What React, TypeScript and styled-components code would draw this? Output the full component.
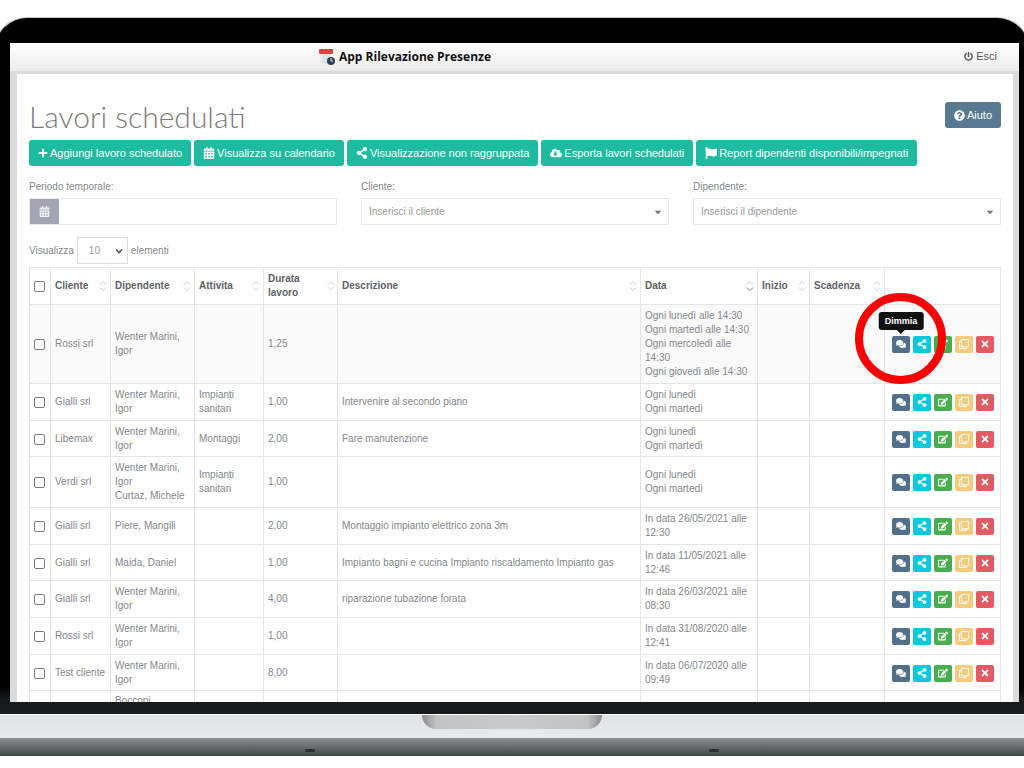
import React from 'react';
import styled, { createGlobalStyle } from 'styled-components';
import type { IconType } from 'react-icons';
import {
  FaPlus, FaCalendarAlt, FaShareAlt, FaCloudDownloadAlt, FaFlag, FaQuestionCircle,
  FaPowerOff, FaComments, FaEdit, FaRegClone, FaTimes, FaCaretDown,
} from 'react-icons/fa';

const GlobalStyle = createGlobalStyle`
  *, *::before, *::after { box-sizing: border-box; }
  body {
    margin: 0;
    background: #fefefe;
    color: #85878c;
    font: 10px/14px "Liberation Sans", Arial, sans-serif;
  }
  button, input, select { font: inherit; color: inherit; margin: 0; }
`;

const Laptop = styled.div`
  display: flex;
  flex-direction: column;
  height: 100vh;
  padding: 18px 0 12px;
  overflow: hidden;
`;

const Lid = styled.div`
  flex: 1;
  min-height: 0;
  display: flex;
  margin: 0 -5px;
  padding: 25px 10px 12px 15px;
  border-radius: 32px 32px 0 0;
  background: linear-gradient(#000 96%, #171b1c 98%);
  box-shadow: 0 0 0 1px #c4c4c4;
`;

const Screen = styled.div`
  flex: 1;
  min-width: 0;
  display: flex;
  flex-direction: column;
  overflow: hidden;
  background: #dadada;
`;

const Base = styled.div`
  height: 24px;
  flex: none;
  display: flex;
  justify-content: center;
  border-top: 1px solid #fff;
  background: linear-gradient(#dfe1e3, #e9eaec);
`;

const Notch = styled.div`
  width: 180px;
  height: 14px;
  border-radius: 0 0 14px 14px;
  background: linear-gradient(90deg, #8b8b8c, #c3c3c4 8%, #cbcbcc 50%, #c3c3c4 92%, #8b8b8c);
`;

const Foot = styled.div`
  height: 18px;
  flex: none;
  display: flex;
  justify-content: space-around;
  align-items: flex-end;
  padding: 0 108px 4px;
  background: linear-gradient(#8d9191, #6a6e6e 45%, #414545);
`;

const Rubber = styled.span`
  width: 10px;
  height: 3px;
  border-radius: 3px;
  background: #2c3030;
`;

const TopBar = styled.header`
  flex: none;
  display: grid;
  grid-template-columns: 1fr auto 1fr;
  align-items: center;
  height: 28px;
  padding-right: 22px;
  background: linear-gradient(#fff, #ececec);
`;

const Brand = styled.div`
  grid-column: 1 / 3;
  display: flex;
  align-items: center;
  gap: 3px;
  margin-left: 308px;
  color: #111;
  font: bold 12px/16px "Open Sans", sans-serif;
`;

const ExitLink = styled.a`
  justify-self: end;
  display: flex;
  align-items: center;
  gap: 3px;
  padding-bottom: 2px;
  color: #555;
  font-size: 11px;
  text-decoration: none;
`;

const Panel = styled.main`
  flex: 1;
  min-height: 0;
  margin: 3px 6px 0 7px;
  padding: 28px 12px 0;
  overflow: hidden;
  background: #fff;
`;

const TitleRow = styled.div`
  display: flex;
  justify-content: space-between;
  align-items: flex-start;
  height: 38px;
`;

const Title = styled.h1`
  margin: 0;
  color: #7c7c7c;
  font: 300 30px/28px Lato, sans-serif;
`;

const Button = styled.button<{ $bg: string }>`
  display: flex;
  align-items: center;
  gap: 2px;
  height: 26px;
  padding: 0 9px;
  border: 0;
  border-radius: 3px;
  background: ${(p) => p.$bg};
  color: #fff;
  font-size: 11px;
  white-space: nowrap;
`;

const Toolbar = styled.div`
  display: flex;
  gap: 3px;
`;

const Filters = styled.div`
  display: grid;
  grid-template-columns: repeat(3, 1fr);
  gap: 24px;
  margin-top: 14px;
`;

const Field = styled.div`
  display: flex;
  flex-direction: column;
  gap: 4px;
`;

const Control = styled.div`
  display: flex;
  align-items: center;
  height: 27px;
  border: 1px solid #e8e9ec;
`;

const ControlIcon = styled.span`
  display: flex;
  align-items: center;
  justify-content: center;
  align-self: stretch;
  width: 29px;
  background: #a3a6b2;
  color: #f0f0f5;
  font-size: 11px;
`;

const TextInput = styled.input`
  flex: 1;
  min-width: 0;
  border: 0;
  padding: 0 8px;
  background: transparent;
`;

const PlainSelect = styled.select`
  flex: 1;
  min-width: 0;
  height: 100%;
  padding: 0 7px;
  border: 0;
  appearance: none;
  background: transparent;
  color: #999;
`;

const Caret = styled(FaCaretDown)`
  flex: none;
  margin-right: 5px;
  color: #777;
  pointer-events: none;
`;

const LengthRow = styled.label`
  display: flex;
  align-items: center;
  gap: 3px;
  height: 27px;
  margin: 12px 0 3px;
`;

const LengthBox = styled.span`
  display: flex;
  align-items: center;
  width: 51px;
  height: 27px;
  padding: 0 3px 0 4px;
  border: 1px solid #dcdde0;
`;

const Table = styled.table`
  width: 100%;
  table-layout: fixed;
  border-collapse: collapse;

  th, td {
    padding: 4px 0 4px 4px;
    border: 1px solid #e4e5e7;
    text-align: left;
    vertical-align: middle;
  }
  th { color: #5f6166; padding-right: 3px; }
  tbody tr:first-child { background: #fafafa; }
  tbody tr:nth-child(3n) td { padding-bottom: 3px; }
  tbody tr:last-child td { vertical-align: top; padding-top: 3px; }
`;

const Col = styled.col<{ $w?: number }>`
  width: ${(p) => (p.$w ? `${p.$w}px` : 'auto')};
`;

const HeadLabel = styled.span`
  display: flex;
  align-items: center;
  justify-content: space-between;
`;

const Check = styled.input`
  display: block;
  width: 11px;
  height: 11px;
  appearance: none;
  border: 1px solid #7b7b7b;
  border-radius: 2px;
  background: #fff;
`;

const Actions = styled.div`
  display: flex;
  gap: 3px;
  padding-left: 3px;
`;

const ActionSlot = styled.span`
  position: relative;
`;

const Action = styled.button<{ $bg: string }>`
  display: flex;
  align-items: center;
  justify-content: center;
  width: 18px;
  height: 17px;
  padding: 0;
  border: 0;
  border-radius: 2px;
  background: ${(p) => p.$bg};
  color: #fff;
  font-size: 10px;
`;

const Tooltip = styled.span`
  position: absolute;
  bottom: calc(100% + 6px);
  left: 50%;
  z-index: 1;
  transform: translateX(-50%);
  padding: 2px 6px;
  border-radius: 3px;
  background: #111;
  color: #fff;
  font-weight: bold;
  font-size: 9px;

  &::after {
    content: '';
    position: absolute;
    top: 100%;
    left: 50%;
    margin-left: -4px;
    border: 4px solid transparent;
    border-top-color: #111;
  }
`;

const Ring = styled.span`
  position: absolute;
  top: -43px;
  left: -37px;
  z-index: 2;
  width: 91px;
  height: 91px;
  border: 8px solid #fa0000;
  border-radius: 50%;
  pointer-events: none;
`;

const Logo = () => (
  <svg width="18" height="18" viewBox="0 0 18 18" aria-hidden="true">
    <rect x="2" y="5" width="12" height="11" fill="#e9ebec" />
    <path d="M4 8h8M4 11h6M4 14h5M6 6v9M9 6v9" stroke="#d6dadd" fill="none" />
    <rect x="1" y="1" width="14" height="5" rx="1" fill="#d9483b" />
    <path d="M4 1v2M8 1v2M12 1v2" stroke="#a8352b" />
    <circle cx="13" cy="13" r="4" fill="#2d4258" />
    <path d="M13 10v3h2" stroke="#dfe6ee" fill="none" />
  </svg>
);

const SortIcon = ({ active = false }: { active?: boolean }) => (
  <svg width="8" height="12" viewBox="0 0 8 12" fill="none" aria-hidden="true">
    <path d="M1 4.5 4 1.5 7 4.5" stroke="#cfcfd2" />
    <path d="M1 7.5 4 10.5 7 7.5" stroke={active ? '#77797d' : '#cfcfd2'} />
  </svg>
);

const SelectArrow = () => (
  <svg width="10" height="8" viewBox="0 0 10 8" fill="none" aria-hidden="true">
    <path d="M2 2.5 5 5.5 8 2.5" stroke="#555" strokeWidth="1.6" />
  </svg>
);

const TEAL = '#1dbb9f';
const SLATE = '#587a90';

const toolbar: [IconType, string, number][] = [
  [FaPlus, 'Aggiungi lavoro schedulato', 10],
  [FaCalendarAlt, 'Visualizza su calendario', 12],
  [FaShareAlt, 'Visualizzazione non raggruppata', 12],
  [FaCloudDownloadAlt, 'Esporta lavori schedulati', 12],
  [FaFlag, 'Report dipendenti disponibili/impegnati', 12],
];

const columns = ['Cliente', 'Dipendente', 'Attivita', 'Durata lavoro', 'Descrizione', 'Data', 'Inizio', 'Scadenza'];
const widths = [21, 60, 84, 69, 74, undefined, 117, 52, 75, 116];

const actions: [IconType, string, string][] = [
  [FaComments, '#53708a', 'Dimmia'],
  [FaShareAlt, '#0cc8dc', 'Condividi'],
  [FaEdit, '#47ad4d', 'Modifica'],
  [FaRegClone, '#f6cb7c', 'Duplica'],
  [FaTimes, '#e25b62', 'Elimina'],
];

interface Job {
  client: string;
  staff: string[];
  activity?: string;
  hours: string;
  text?: string;
  dates: string[];
}

const WM = 'Wenter Marini, Igor';

const jobs: Job[] = [
  {
    client: 'Rossi srl', staff: [WM], hours: '1,25',
    dates: ['Ogni lunedì alle 14:30', 'Ogni martedì alle 14:30', 'Ogni mercoledì alle 14:30', 'Ogni giovedì alle 14:30'],
  },
  { client: 'Gialli srl', staff: [WM], activity: 'Impianti sanitari', hours: '1,00', text: 'Intervenire al secondo piano', dates: ['Ogni lunedì', 'Ogni martedì'] },
  { client: 'Libemax', staff: [WM], activity: 'Montaggi', hours: '2,00', text: 'Fare manutenzione', dates: ['Ogni lunedì', 'Ogni martedì'] },
  { client: 'Verdi srl', staff: [WM, 'Curtaz, Michele'], activity: 'Impianti sanitari', hours: '1,00', dates: ['Ogni lunedì', 'Ogni martedì'] },
  { client: 'Gialli srl', staff: ['Piere, Mangili'], hours: '2,00', text: 'Montaggio impianto elettrico zona 3m', dates: ['In data 26/05/2021 alle 12:30'] },
  { client: 'Gialli srl', staff: ['Maida, Daniel'], hours: '1,00', text: 'Impianto bagni e cucina Impianto riscaldamento Impianto gas', dates: ['In data 11/05/2021 alle 12:46'] },
  { client: 'Gialli srl', staff: [WM], hours: '4,00', text: 'riparazione tubazione forata', dates: ['In data 26/03/2021 alle 08:30'] },
  { client: 'Rossi srl', staff: [WM], hours: '1,00', dates: ['In data 31/08/2020 alle 12:41'] },
  { client: 'Test cliente', staff: [WM], hours: '8,00', dates: ['In data 06/07/2020 alle 09:49'] },
];

const JobRow = ({ job, highlighted }: { job: Job; highlighted: boolean }) => (
  <tr>
    <td><Check type="checkbox" aria-label={`Seleziona ${job.client}`} /></td>
    <td>{job.client}</td>
    <td>{job.staff.map((s) => <div key={s}>{s}</div>)}</td>
    <td>{job.activity}</td>
    <td>{job.hours}</td>
    <td>{job.text}</td>
    <td>{job.dates.map((d) => <div key={d}>{d}</div>)}</td>
    <td />
    <td />
    <td>
      <Actions>
        {actions.map(([Icon, bg, label], i) => (
          <ActionSlot key={label}>
            <Action type="button" $bg={bg} aria-label={label}><Icon /></Action>
            {highlighted && i === 0 && <><Tooltip role="tooltip">{label}</Tooltip><Ring /></>}
          </ActionSlot>
        ))}
      </Actions>
    </td>
  </tr>
);

const SelectField = ({ id, label, placeholder }: { id: string; label: string; placeholder: string }) => (
  <Field>
    <label htmlFor={id}>{label}</label>
    <Control>
      <PlainSelect id={id}><option>{placeholder}</option></PlainSelect>
      <Caret size={10} />
    </Control>
  </Field>
);

export default function App() {
  return (
    <Laptop>
      <GlobalStyle />
      <Lid>
        <Screen>
          <TopBar>
            <Brand><Logo />App Rilevazione Presenze</Brand>
            <ExitLink href="#esci"><FaPowerOff size={9} />Esci</ExitLink>
          </TopBar>
          <Panel>
            <TitleRow>
              <Title>Lavori schedulati</Title>
              <Button type="button" $bg={SLATE}><FaQuestionCircle size={11} />Aiuto</Button>
            </TitleRow>
            <Toolbar>
              {toolbar.map(([Icon, label, size]) => (
                <Button key={label} type="button" $bg={TEAL}><Icon size={size} />{label}</Button>
              ))}
            </Toolbar>
            <Filters>
              <Field>
                <label htmlFor="periodo">Periodo temporale:</label>
                <Control>
                  <ControlIcon><FaCalendarAlt /></ControlIcon>
                  <TextInput id="periodo" type="text" />
                </Control>
              </Field>
              <SelectField id="cliente" label="Cliente:" placeholder="Inserisci il cliente" />
              <SelectField id="dipendente" label="Dipendente:" placeholder="Inserisci il dipendente" />
            </Filters>
            <LengthRow>
              Visualizza
              <LengthBox>
                <PlainSelect><option>10</option></PlainSelect>
                <SelectArrow />
              </LengthBox>
              elementi
            </LengthRow>
            <Table>
              <colgroup>{widths.map((w, i) => <Col key={i} $w={w} />)}</colgroup>
              <thead>
                <tr>
                  <th><Check type="checkbox" aria-label="Seleziona tutti" /></th>
                  {columns.map((c) => (
                    <th key={c}><HeadLabel>{c}<SortIcon active={c === 'Data'} /></HeadLabel></th>
                  ))}
                  <th />
                </tr>
              </thead>
              <tbody>
                {jobs.map((job, i) => <JobRow key={i} job={job} highlighted={i === 0} />)}
                <tr>
                  <td /><td /><td>Bocconi,</td><td /><td /><td /><td /><td /><td /><td />
                </tr>
              </tbody>
            </Table>
          </Panel>
        </Screen>
      </Lid>
      <Base><Notch /></Base>
      <Foot><Rubber /><Rubber /></Foot>
    </Laptop>
  );
}
